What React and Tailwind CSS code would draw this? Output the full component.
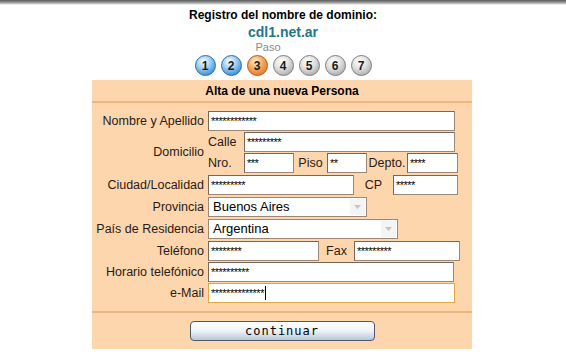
const steps = [
  { n: 1, tone: "blue" },
  { n: 2, tone: "blue" },
  { n: 3, tone: "orange" },
  { n: 4, tone: "gray" },
  { n: 5, tone: "gray" },
  { n: 6, tone: "gray" },
  { n: 7, tone: "gray" },
];

const tones = {
  blue: "bg-[radial-gradient(circle_at_40%_30%,#ffffff_0%,#a9d4f5_35%,#3b8fd6_80%,#2a6fb0_100%)] border-[#2f6aa0]",
  orange: "bg-[radial-gradient(circle_at_40%_30%,#fff4e6_0%,#f7b36b_35%,#e8772a_80%,#c85a16_100%)] border-[#b9561a]",
  gray: "bg-[radial-gradient(circle_at_40%_30%,#ffffff_0%,#e2e2e2_40%,#a9a9a9_85%,#8a8a8a_100%)] border-[#7d7d7d]",
};

function Step({ n, tone }) {
  return (
    <div
      className={`flex h-[21px] w-[21px] items-center justify-center rounded-full border text-[12px] font-bold text-[#1a1a1a] ${tones[tone]}`}
    >
      {n}
    </div>
  );
}

function Field({ w, value, focus }) {
  return (
    <div
      className={`flex h-[20px] items-center bg-white px-[2px] text-[11px] leading-none text-black ${
        focus ? "border border-[#e0a840]" : "border border-[#9d8878] border-l-[#7a6658] border-t-[#7a6658]"
      } ${w}`}
    >
      <span className="tracking-[-0.5px]">{value}</span>
      {focus && <span className="ml-[1px] h-[14px] w-px bg-black" />}
    </div>
  );
}

function Select({ w, value }) {
  return (
    <div className={`flex h-[20px] items-center justify-between border border-[#9d8878] bg-white text-[13px] text-black ${w}`}>
      <span className="pl-[4px]">{value}</span>
      <div className="mr-[1px] flex h-[16px] w-[15px] items-center justify-center bg-[#f4f4f4]">
        <svg width="7" height="4" viewBox="0 0 7 4">
          <path d="M0 0h7L3.5 4z" fill="#c4c4c4" />
        </svg>
      </div>
    </div>
  );
}

function Row({ label, children, className = "" }) {
  return (
    <div className={`flex items-center ${className}`}>
      <div className="w-[116px] shrink-0 pr-[4px] text-right">{label}</div>
      <div className="flex items-center">{children}</div>
    </div>
  );
}

export default function App() {
  return (
    <div className="relative h-[360px] w-[566px] overflow-hidden bg-white font-['Liberation_Sans',Arial,sans-serif] text-[12.5px] text-[#2b1a14]">
      <div className="h-[5px] bg-gradient-to-b from-[#5a5a5a] via-[#9a9a9a] to-white" />
      <div className="flex flex-col items-center">
        <div className="mt-[3px] text-[12px] font-bold leading-[14px] text-black">Registro del nombre de dominio:</div>
        <div className="mt-[2px] text-[14px] font-bold leading-[16px] text-[#237887]">cdl1.net.ar</div>
        <div className="mt-[1px] ml-[-30px] text-[11px] leading-[13px] text-[#8a8a8a]">Paso</div>
        <div className="mt-[1px] flex gap-[5px]">
          {steps.map((s) => (
            <Step key={s.n} {...s} />
          ))}
        </div>
      </div>

      <div className="ml-[92px] mt-[4px] w-[380px] bg-[#fdd6ae]">
        <div className="flex h-[23px] items-center justify-center border-b-2 border-[#f1b47a] text-[12px] font-bold text-black">
          Alta de una nueva Persona
        </div>

        <div className="flex flex-col pb-[8px] pt-[8px]">
          <Row label="Nombre y Apellido">
            <Field w="w-[247px]" value="************" />
          </Row>

          <div className="mt-[1px] flex">
            <div className="flex w-[116px] shrink-0 items-center justify-end pr-[4px]">Domicilio</div>
            <div className="flex flex-col gap-[1px]">
              <div className="flex items-center">
                <span className="w-[36px]">Calle</span>
                <Field w="w-[211px]" value="*********" />
              </div>
              <div className="flex items-center">
                <span className="w-[36px]">Nro.</span>
                <Field w="w-[50px]" value="***" />
                <span className="w-[33px] text-center">Piso</span>
                <Field w="w-[40px]" value="**" />
                <span className="w-[40px] text-center">Depto.</span>
                <Field w="w-[51px]" value="****" />
              </div>
            </div>
          </div>

          <Row label="Ciudad/Localidad" className="mt-[2px]">
            <Field w="w-[146px]" value="*********" />
            <span className="w-[39px] text-center">CP</span>
            <Field w="w-[65px]" value="*****" />
          </Row>

          <Row label="Provincia" className="mt-[2px]">
            <Select w="w-[159px]" value="Buenos Aires" />
          </Row>

          <Row label="País de Residencia" className="mt-[2px]">
            <Select w="w-[190px]" value="Argentina" />
          </Row>

          <Row label="Teléfono" className="mt-[2px]">
            <Field w="w-[111px]" value="********" />
            <span className="w-[35px] text-center">Fax</span>
            <Field w="w-[106px]" value="*********" />
          </Row>

          <Row label="Horario telefónico" className="mt-[1px]">
            <Field w="w-[246px]" value="**********" />
          </Row>

          <Row label="e-Mail" className="mt-[1px]">
            <Field w="w-[247px]" value="**************" focus />
          </Row>
        </div>

        <div className="flex justify-center border-t-2 border-[#f1b47a] pb-[8px] pt-[8px]">
          <button className="h-[20px] w-[185px] rounded-[4px] border border-[#4c5a6a] bg-gradient-to-b from-white via-[#eef2f8] to-[#b9c6d8] font-['DejaVu_Sans_Mono',monospace] text-[12px] leading-none tracking-[1px] text-black">
            continuar
          </button>
        </div>
      </div>
    </div>
  );
}
